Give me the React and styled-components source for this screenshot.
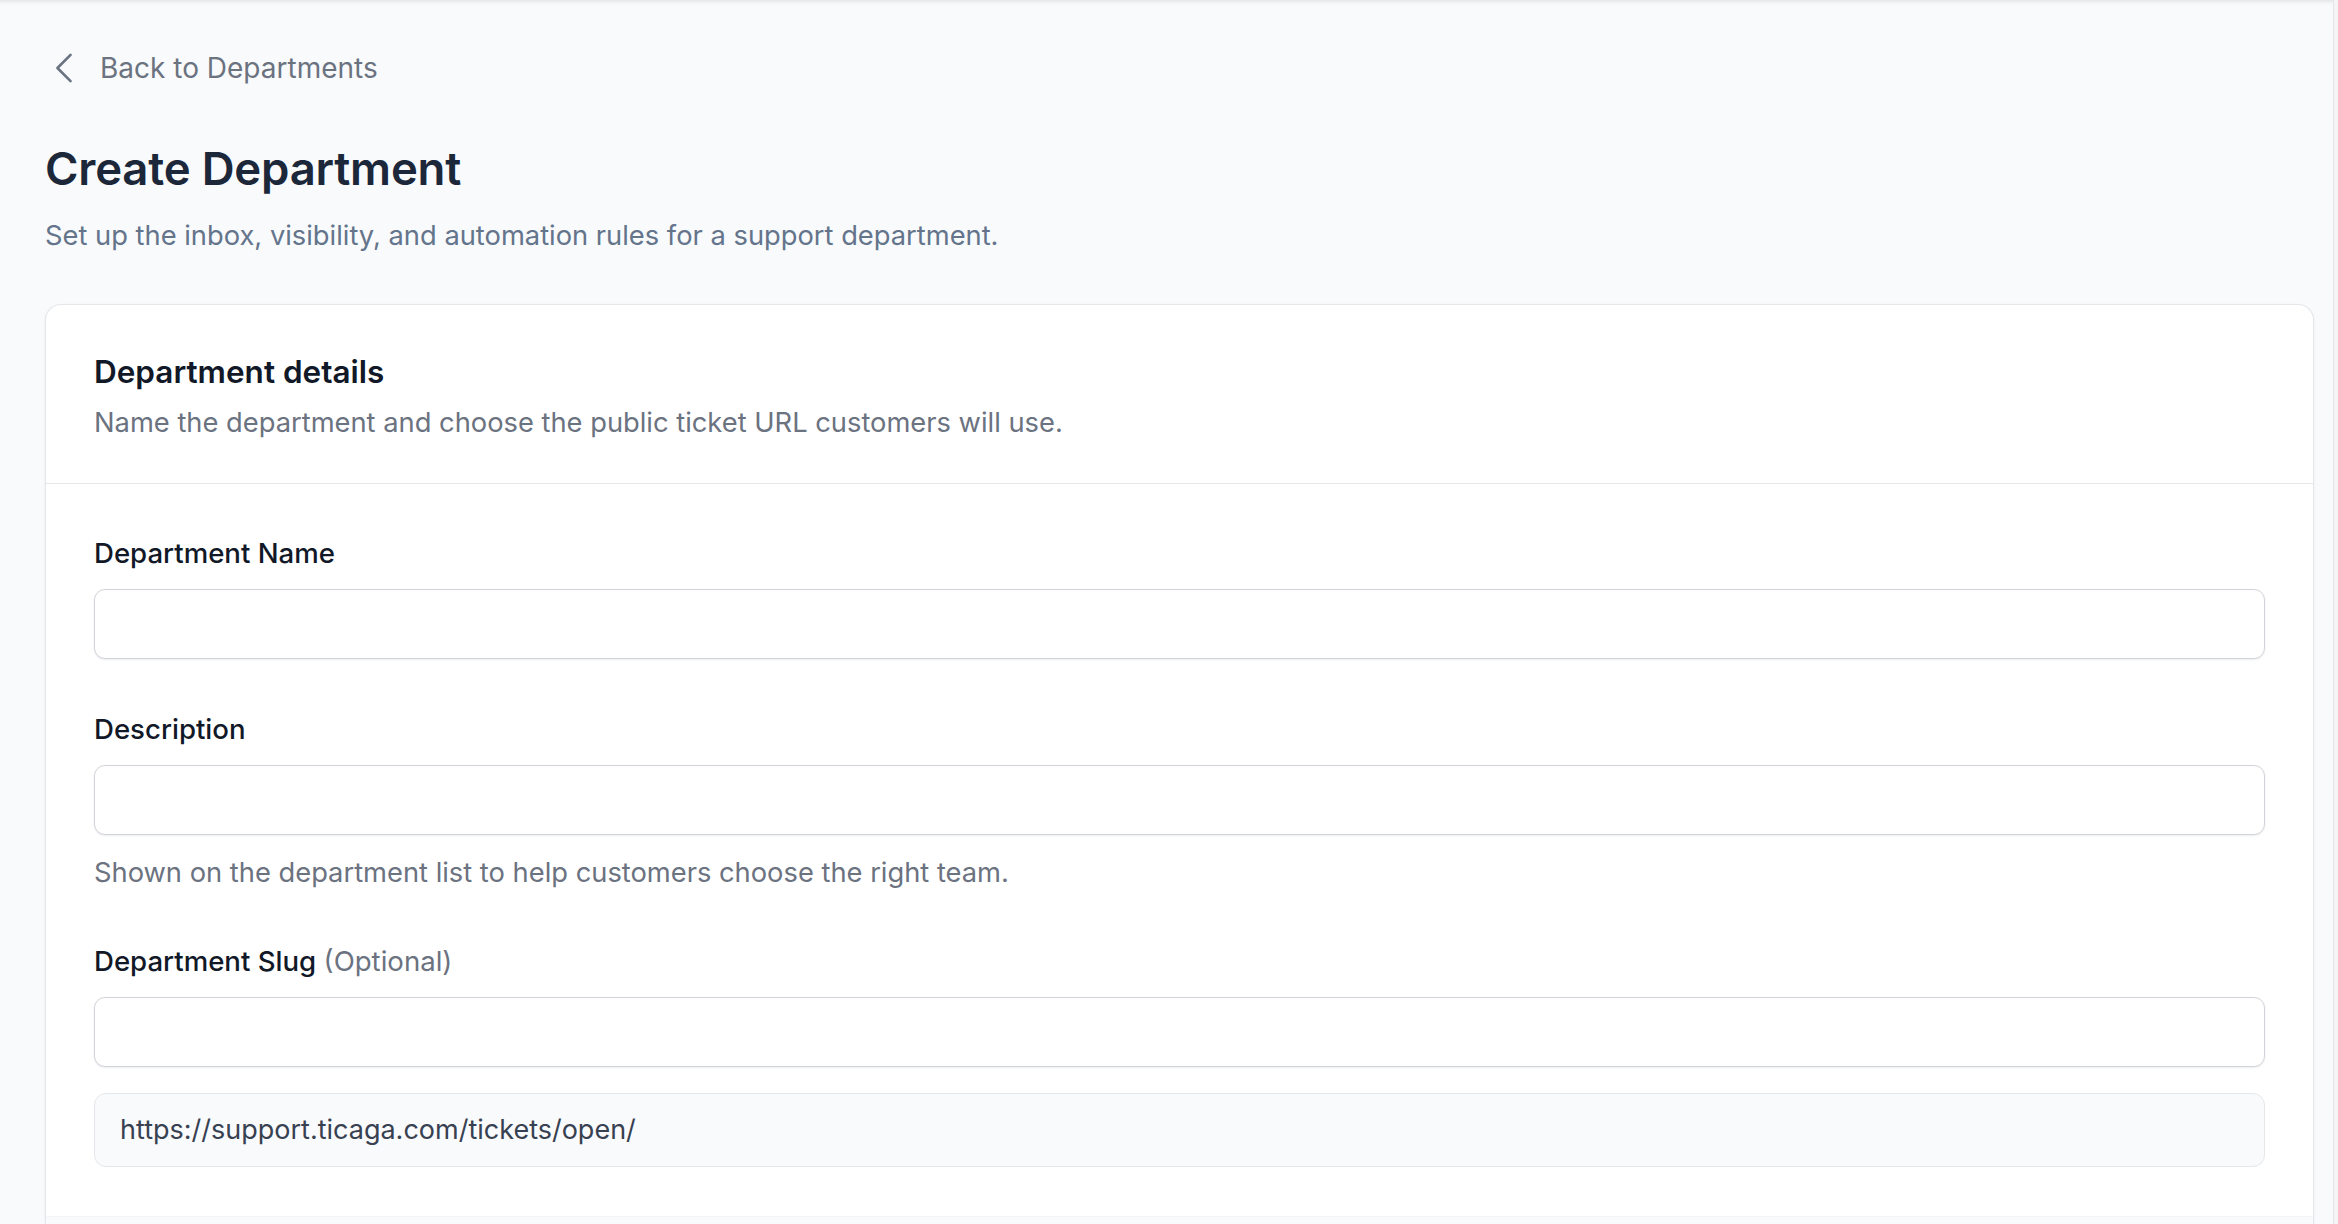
import React from "react";
import styled, { createGlobalStyle } from "styled-components";

const GlobalStyle = createGlobalStyle`
  html, body {
    margin: 0;
    padding: 0;
    background: #f8fafc;
    font-family: Inter, "Noto Sans", "Liberation Sans", sans-serif;
    -webkit-font-smoothing: antialiased;
  }
  * { box-sizing: border-box; }
`;

const Shell = styled.div`
  display: flex;
  min-height: 100vh;
  background: #f8fafc;
  box-shadow: inset 0 5px 5px -4px rgba(0, 0, 0, 0.12);
`;

const Main = styled.main`
  flex: 1;
  min-width: 0;
  padding: 46.5px 19px 0 45px;
  display: flex;
  flex-direction: column;
`;

const ScrollTrack = styled.div`
  width: 5px;
  flex: none;
  background: #f4f4f5;
  border-left: 1px solid #e4e4e7;
`;

const BackLink = styled.a`
  display: inline-flex;
  align-items: center;
  gap: 15px;
  height: 42px;
  margin-left: -2px;
  align-self: flex-start;
  color: #6b7280;
  font-size: 28px;
  line-height: 42px;
  text-decoration: none;
  cursor: pointer;
`;

const Title = styled.h1`
  margin: 53.5px 0 0;
  font-size: 45.5px;
  line-height: 54px;
  font-weight: 600;
  color: #1c273a;
  letter-spacing: -0.2px;
`;

const Subtitle = styled.p`
  margin: 20px 0 0;
  font-size: 27.3px;
  line-height: 40px;
  color: #64748b;
`;

const Card = styled.section`
  margin-top: 48px;
  background: #ffffff;
  border: 1px solid #e5e7eb;
  border-bottom: none;
  border-radius: 16px 16px 0 0;
  box-shadow: 0 1px 3px rgba(15, 23, 42, 0.06);
  overflow: hidden;
`;

const CardHeader = styled.header`
  padding: 45.5px 48px 40px;
  border-bottom: 1px solid #e5e7eb;
`;

const CardTitle = styled.h2`
  margin: 0;
  font-size: 31.5px;
  line-height: 42px;
  font-weight: 600;
  color: #111827;
`;

const CardDescription = styled.p`
  margin: 10px 0 0;
  font-size: 27.3px;
  line-height: 40px;
  color: #6b7280;
`;

const CardBody = styled.div`
  padding: 52px 48px 49px;
  display: flex;
  flex-direction: column;
  gap: 53px;
`;

const Field = styled.div`
  display: flex;
  flex-direction: column;
`;

const Label = styled.label`
  font-size: 27.6px;
  line-height: 35px;
  font-weight: 500;
  color: #111827;
`;

const Optional = styled.span`
  font-weight: 400;
  color: #6b7280;
`;

const Input = styled.input`
  margin-top: 18px;
  height: 70px;
  width: 100%;
  border: 1px solid #d1d5db;
  border-radius: 11px;
  background: #ffffff;
  box-shadow: 0 1px 2px rgba(15, 23, 42, 0.08);
  padding: 0 24px;
  font: inherit;
  font-size: 27px;
  color: #111827;
  outline: none;
`;

const Help = styled.p`
  margin: 19px 0 0;
  font-size: 27.3px;
  line-height: 37px;
  color: #6b7280;
`;

const UrlPreview = styled.div`
  margin-top: 26px;
  height: 74px;
  display: flex;
  align-items: center;
  padding: 0 25px;
  background: #f9fafb;
  border: 1px solid #e5e7eb;
  border-radius: 12px;
  font-size: 27px;
  color: #374151;
`;

const CardFooter = styled.div`
  height: 60px;
  background: #f9fafb;
  border-top: 1px solid #f3f4f6;
`;

const ChevronLeft = () => (
  <svg width="42" height="42" viewBox="0 0 24 24" fill="none" stroke="currentColor" strokeWidth="1.5">
    <path strokeLinecap="round" strokeLinejoin="round" d="M15.75 19.5 8.25 12l7.5-7.5" />
  </svg>
);

export default function App() {
  return (
    <>
      <GlobalStyle />
      <Shell>
        <Main>
          <BackLink>
            <ChevronLeft />
            Back to Departments
          </BackLink>
          <Title>Create Department</Title>
          <Subtitle>Set up the inbox, visibility, and automation rules for a support department.</Subtitle>
          <Card>
            <CardHeader>
              <CardTitle>Department details</CardTitle>
              <CardDescription>Name the department and choose the public ticket URL customers will use.</CardDescription>
            </CardHeader>
            <CardBody>
              <Field>
                <Label htmlFor="dept-name">Department Name</Label>
                <Input id="dept-name" type="text" />
              </Field>
              <Field>
                <Label htmlFor="dept-desc">Description</Label>
                <Input id="dept-desc" type="text" />
                <Help>Shown on the department list to help customers choose the right team.</Help>
              </Field>
              <Field>
                <Label htmlFor="dept-slug">
                  Department Slug <Optional>(Optional)</Optional>
                </Label>
                <Input id="dept-slug" type="text" />
                <UrlPreview>https://support.ticaga.com/tickets/open/</UrlPreview>
              </Field>
            </CardBody>
            <CardFooter />
          </Card>
        </Main>
        <ScrollTrack />
      </Shell>
    </>
  );
}
